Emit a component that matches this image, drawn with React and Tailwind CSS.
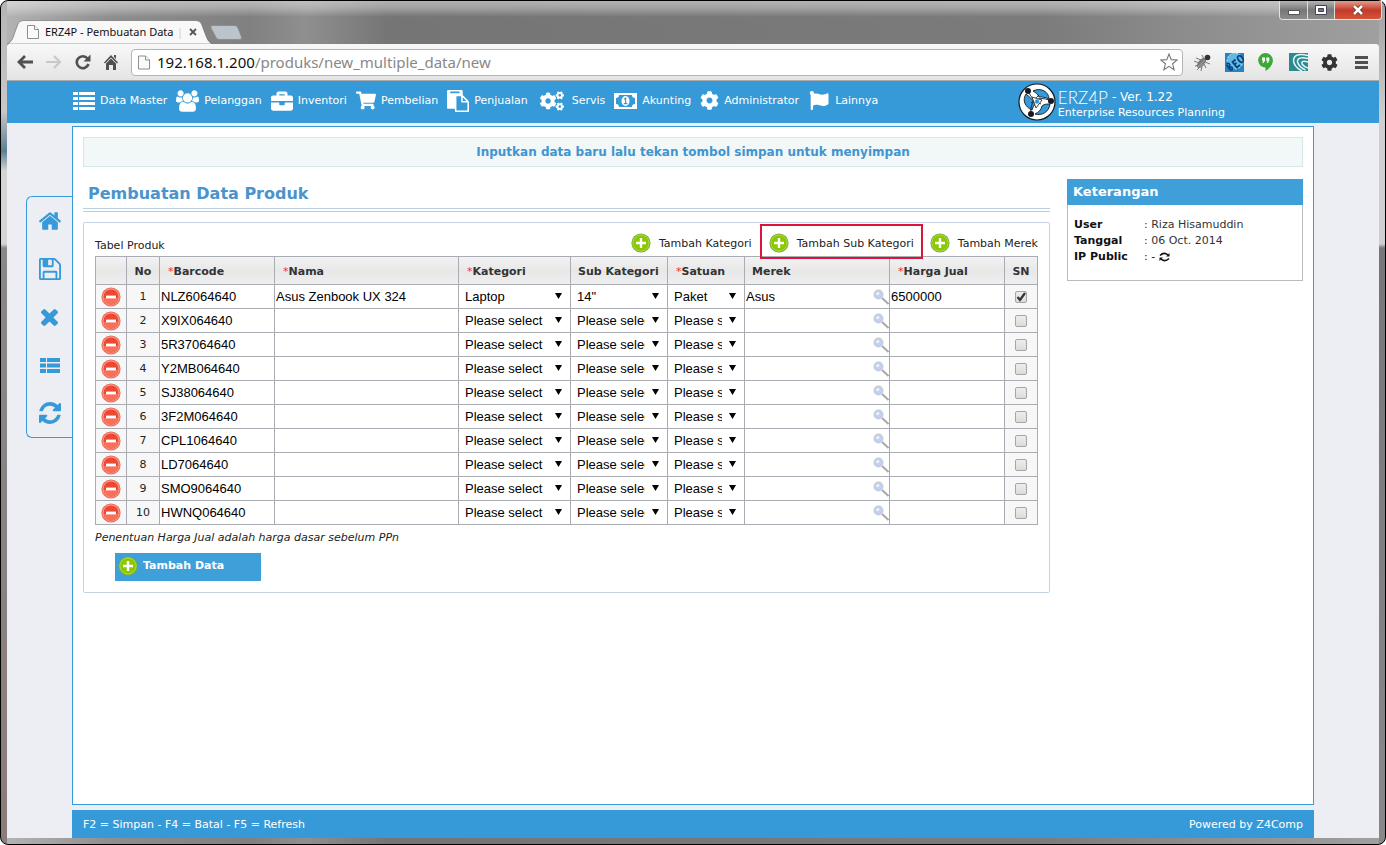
import { FaBriefcase, FaCog, FaCogs, FaFlag, FaShoppingCart } from "react-icons/fa";

const PRODUCTS = [
  {
    barcode: "NLZ6064640",
    nama: "Asus Zenbook UX 324",
    kategori: "Laptop",
    subKategori: '14"',
    satuan: "Paket",
    merek: "Asus",
    harga: "6500000",
    sn: true,
  },
  { barcode: "X9IX064640" },
  { barcode: "5R37064640" },
  { barcode: "Y2MB064640" },
  { barcode: "SJ38064640" },
  { barcode: "3F2M064640" },
  { barcode: "CPL1064640" },
  { barcode: "LD7064640" },
  { barcode: "SMO9064640" },
  { barcode: "HWNQ064640" },
];

const COLUMNS = [
  { label: "Barcode", required: true },
  { label: "Nama", required: true },
  { label: "Kategori", required: true },
  { label: "Sub Kategori" },
  { label: "Satuan", required: true },
  { label: "Merek" },
  { label: "Harga Jual", required: true },
];

function ListIcon({ className }) {
  return (
    <svg viewBox="0 0 22 18" className={className} fill="currentColor" aria-hidden="true">
      <path d="M0 0h5v3H0zM6 0h16v3H6zM0 5h5v3H0zM6 5h16v3H6zM0 10h5v3H0zM6 10h16v3H6zM0 15h5v3H0zM6 15h16v3H6z" />
    </svg>
  );
}

function ThListIcon({ className }) {
  return (
    <svg viewBox="0 0 20 15" className={className} fill="currentColor" aria-hidden="true">
      <path d="M0 0h6v4H0zM7 0h13v4H7zM0 5.5h6v4H0zM7 5.5h13v4H7zM0 11h6v4H0zM7 11h13v4H7z" />
    </svg>
  );
}

function UsersIcon({ className }) {
  return (
    <svg viewBox="0 0 1920 1792" className={className} fill="currentColor" aria-hidden="true">
      <path d="M593 896q-162 5-265 128h-134q-82 0-138-40.5t-56-118.5q0-353 124-353 6 0 43.5 21t97.5 42.5 119 21.5q67 0 133-23-5 37-5 66 0 139 81 256zm1071 637q0 120-73 189.5t-194 69.5h-874q-121 0-194-69.5t-73-189.5q0-53 3.5-103.5t14-109 26.5-108.5 43-97.5 62-81 85.5-53.5 111.5-20q10 0 43 21.5t73 48 107 48 135 21.5 135-21.5 107-48 73-48 43-21.5q61 0 111.5 20t85.5 53.5 62 81 43 97.5 26.5 108.5 14 109 3.5 103.5zm-1024-1277q0 106-75 181t-181 75-181-75-75-181 75-181 181-75 181 75 75 181zm704 384q0 159-112.5 271.5t-271.5 112.5-271.5-112.5-112.5-271.5 112.5-271.5 271.5-112.5 271.5 112.5 112.5 271.5zm576 225q0 78-56 118.5t-138 40.5h-134q-103-123-265-128 81-117 81-256 0-29-5-66 66 23 133 23 59 0 119-21.5t97.5-42.5 43.5-21q124 0 124 353zm-128-609q0 106-75 181t-181 75-181-75-75-181 75-181 181-75 181 75 75 181z" />
    </svg>
  );
}

function PasteIcon({ className }) {
  return (
    <svg viewBox="0 0 1792 1792" className={className} fill="currentColor" aria-hidden="true">
      <path d="M768 1664h896v-640h-416q-40 0-68-28t-28-68v-416h-384v1152zm256-1440v-64q0-13-9.5-22.5t-22.5-9.5h-704q-13 0-22.5 9.5t-9.5 22.5v64q0 13 9.5 22.5t22.5 9.5h704q13 0 22.5-9.5t9.5-22.5zm256 672h299l-299-299v299zm512 128v672q0 40-28 68t-68 28h-960q-40 0-68-28t-28-68v-160h-544q-40 0-68-28t-28-68v-1344q0-40 28-68t68-28h1088q40 0 68 28t28 68v328q21 13 36 28l408 408q28 28 48 76t20 88z" />
    </svg>
  );
}

function MoneyIcon({ className }) {
  return (
    <svg viewBox="0 0 23 16" className={className} aria-hidden="true">
      <path fill="currentColor" fillRule="evenodd" d="M0 0h23v16H0zM5 2a3 3 0 0 1-3 3v6a3 3 0 0 1 3 3h13a3 3 0 0 1 3-3V5a3 3 0 0 1-3-3z" />
      <ellipse cx="11.5" cy="8" rx="4" ry="5" fill="currentColor" />
      <path d="M10 6.3l1.6-1.1v5.2M9.8 10.7h3.6" fill="none" stroke="#379ad8" strokeWidth="1.2" />
    </svg>
  );
}

function HomeIcon({ className }) {
  return (
    <svg viewBox="89 240 1614 1300" className={className} fill="currentColor" aria-hidden="true">
      <path d="M1472 992v480q0 26-19 45t-45 19h-384v-384h-256v384h-384q-26 0-45-19t-19-45v-480q0-1 .5-3t.5-3l575-474 575 474q1 2 1 6zm223-69l-62 74q-8 9-21 11h-3q-13 0-21-7l-692-577-692 577q-12 8-24 7-13-2-21-11l-62-74q-8-10-7-23.5t11-21.5l719-599q32-26 76-26t76 26l244 204v-195q0-14 9-23t23-9h192q14 0 23 9t9 23v408l219 182q10 8 11 21.5t-7 23.5z" />
    </svg>
  );
}

function SaveIcon({ className }) {
  return (
    <svg viewBox="128 128 1536 1536" className={className} fill="currentColor" aria-hidden="true">
      <path d="M512 1536h768v-384h-768v384zm896 0h128v-896q0-14-10-38.5t-20-34.5l-281-281q-10-10-34-20t-39-10v416q0 40-28 68t-68 28h-576q-40 0-68-28t-28-68v-416h-128v1280h128v-416q0-40 28-68t68-28h832q40 0 68 28t28 68v416zm-384-928v-320q0-13-9.5-22.5t-22.5-9.5h-192q-13 0-22.5 9.5t-9.5 22.5v320q0 13 9.5 22.5t22.5 9.5h192q13 0 22.5-9.5t9.5-22.5zm640 32v928q0 40-28 68t-68 28h-1344q-40 0-68-28t-28-68v-1344q0-40 28-68t68-28h928q40 0 88 20t76 48l280 280q28 28 48 76t20 88z" />
    </svg>
  );
}

function CloseIcon({ className }) {
  return (
    <svg viewBox="302 366 1188 1188" className={className} fill="currentColor" aria-hidden="true">
      <path d="M1490 1322q0 40-28 68l-136 136q-28 28-68 28t-68-28l-294-294-294 294q-28 28-68 28t-68-28l-136-136q-28-28-28-68t28-68l294-294-294-294q-28-28-28-68t28-68l136-136q28-28 68-28t68 28l294 294 294-294q28-28 68-28t68 28l136 136q28 28 28 68t-28 68l-294 294 294 294q28 28 28 68z" />
    </svg>
  );
}

function RefreshIcon({ className }) {
  return (
    <svg viewBox="128 128 1536 1536" className={className} fill="currentColor" aria-hidden="true">
      <path d="M1639 1056q0 5-1 7-64 268-268 434.5t-478 166.5q-146 0-282.5-55t-243.5-157l-129 129q-19 19-45 19t-45-19-19-45v-448q0-26 19-45t45-19h448q26 0 45 19t19 45-19 45l-137 137q71 66 161 102t187 36q134 0 250-65t186-179q11-17 53-117 8-23 30-23h192q13 0 22.5 9.5t9.5 22.5zm25-800v448q0 26-19 45t-45 19h-448q-26 0-45-19t-19-45 19-45l138-138q-148-137-349-137-134 0-250 65t-186 179q-11 17-53 117-8 23-30 23h-199q-13 0-22.5-9.5t-9.5-22.5v-7q65-268 270-434.5t480-166.5q146 0 284 55.5t245 156.5l130-129q19-19 45-19t45 19 19 45z" />
    </svg>
  );
}

function PlusCircle() {
  return (
    <svg viewBox="0 0 20 20" className="h-5 w-5 shrink-0" aria-hidden="true">
      <circle cx="10" cy="10" r="9.6" fill="#74b022" />
      <circle cx="10" cy="10" r="8.2" fill="#8cc800" stroke="#b9df75" strokeWidth=".8" />
      <path d="M10 5v10M5 10h10" stroke="#fff" strokeWidth="2.4" />
    </svg>
  );
}

function MinusCircle() {
  return (
    <svg viewBox="0 0 20 20" className="h-5 w-5" aria-hidden="true">
      <circle cx="10" cy="10" r="9.6" fill="#ee6a56" />
      <circle cx="10" cy="10" r="8" fill="#ea4a35" stroke="#fbb5a6" strokeWidth=".8" />
      <path d="M3 11a7 7 0 0 0 14 0z" fill="#f7705c" />
      <path d="M5 10h10" stroke="#fff" strokeWidth="2.8" />
    </svg>
  );
}

function MagnifierIcon() {
  return (
    <svg viewBox="0 0 16 16" className="h-4 w-4" aria-hidden="true">
      <path d="M9 9l6.500 6" stroke="#a5a5a5" strokeWidth="1.800" />
      <circle cx="5.500" cy="5.500" r="4.300" fill="#bcd0fb" stroke="#c9ccd6" strokeWidth="1.400" />
      <circle cx="4.800" cy="4.600" r="1.700" fill="#eaf1ff" />
    </svg>
  );
}

function PageIcon({ className }) {
  return (
    <svg viewBox="0 0 12 14" className={className} fill="#fafafa" stroke="#8e8e8e" aria-hidden="true">
      <path d="M.5.5h7l4 4v9H.5z" />
      <path d="M7.500.5v4h4" />
    </svg>
  );
}

function LogoIcon() {
  return (
    <svg viewBox="0 0 38 38" className="h-[38px] w-[38px]" aria-hidden="true">
      <circle cx="19" cy="19" r="18" fill="#fff" stroke="#151a22" strokeWidth="1.200" />
      <g fill="#379ad8" stroke="#151a22" strokeWidth=".9">
        <path d="M15 8C23 4 31 9 31 16c-4-2-7-2-10-2-1-3-3-4-6-6z" />
        <path d="M8 11c-4 6-1 13 6 16 1-3 2-5 4-7-4-3-6-6-10-9z" />
        <path d="M17 31c7 2 14-2 15-10-3 0-6 0-8 2-1 4-3 6-7 8z" />
      </g>
      <g fill="none" stroke="#151a22" strokeWidth=".9">
        <path d="M10 8c3 6 6 10 13 13M33 18c-8-4-14-3-20 2M13 31c-1-8 2-14 8-19" />
      </g>
      <path d="M14 14l10 3-6 8z" fill="#fff" stroke="#151a22" strokeWidth=".8" />
      <circle cx="19" cy="18.500" r="2.200" fill="#379ad8" />
      <circle cx="10" cy="8" r="3" fill="#151a22" />
      <circle cx="33" cy="18" r="3" fill="#151a22" />
      <circle cx="13" cy="31" r="3" fill="#151a22" />
    </svg>
  );
}

const MENU = [
  { label: "Data Master", icon: <ListIcon className="h-[18px] w-[22px]" /> },
  { label: "Pelanggan", icon: <UsersIcon className="h-[22px] w-[23px]" /> },
  { label: "Inventori", icon: <FaBriefcase className="h-[22px] w-[22px]" /> },
  { label: "Pembelian", icon: <FaShoppingCart className="h-[19px] w-5" /> },
  { label: "Penjualan", icon: <PasteIcon className="h-[22px] w-[22px]" /> },
  { label: "Servis", icon: <FaCogs className="mx-[3px] h-[22px] w-6" /> },
  { label: "Akunting", icon: <MoneyIcon className="h-4 w-[23px]" /> },
  { label: "Administrator", icon: <FaCog className="h-[19px] w-[19px]" /> },
  { label: "Lainnya", icon: <FaFlag className="h-[19px] w-[22px]" /> },
];

const SHORTCUTS = [
  { label: "Beranda", icon: <HomeIcon className="h-[18px] w-[22px]" /> },
  { label: "Simpan", icon: <SaveIcon className="h-[22px] w-[22px]" /> },
  { label: "Batal", icon: <CloseIcon className="h-[17px] w-[17px]" /> },
  { label: "Daftar", icon: <ThListIcon className="h-[15px] w-5" /> },
  { label: "Refresh", icon: <RefreshIcon className="h-[22px] w-[22px]" /> },
];

function TitleBar() {
  return (
    <header className="flex h-[43px] items-end justify-between">
      <div className="flex items-end">
        <div className="relative flex h-6 w-[205px] items-center gap-[6px] pl-5">
          <svg viewBox="0 0 205 24" className="absolute inset-0 h-6 w-[205px]" aria-hidden="true">
            <path d="M0 24C5 22 6 18 8 12L11 4Q12.500.5 16 .5H189q4 0 5.500 3.500L199 16q2 6 6 8z" fill="#f8f8f8" stroke="#666" strokeWidth=".6" />
          </svg>
          <PageIcon className="relative h-[14px] w-3" />
          <span className="relative flex w-[138px] items-center justify-between font-['Noto_Sans','Open_Sans',sans-serif] text-[11px] whitespace-nowrap text-[#111]">
            ERZ4P - Pembuatan Data
            <span className="text-[#ccc]">|</span>
          </span>
          <button type="button" aria-label="Tutup tab" className="relative text-[#555]">
            <svg viewBox="0 0 8 8" className="h-2 w-2" stroke="currentColor" strokeWidth="1.800" aria-hidden="true">
              <path d="M1 1l6 6M7 1L1 7" />
            </svg>
          </button>
        </div>
        <button type="button" aria-label="Tab baru" className="mb-1 -ml-[2px]">
          <svg viewBox="0 0 32 15" className="h-[15px] w-8" aria-hidden="true">
            <path d="M2 .5h23q2 0 3 2.500L31.500 12q.5 2.500-2 2.500H9q-2 0-3-2L1 3Q.2.500 2 .5z" fill="#bcc4cb" stroke="#85898c" strokeWidth=".8" />
          </svg>
        </button>
      </div>
      <div className="-mr-[3px] flex h-[19px] self-start overflow-hidden rounded-b border border-t-0 border-[#e2e2e2] text-white">
        <button type="button" aria-label="Minimize" className="flex w-7 items-center justify-center border-r border-[#ddd] bg-linear-to-b from-[#b5b5b5] via-[#777] to-[#8c8c8c]">
          <svg viewBox="0 0 12 5" className="mt-1 h-[5px] w-3" aria-hidden="true">
            <path d="M.5.5h11v4H.5z" fill="#fff" stroke="#555" />
          </svg>
        </button>
        <button type="button" aria-label="Maximize" className="flex w-[27px] items-center justify-center border-r border-[#ddd] bg-linear-to-b from-[#b5b5b5] via-[#777] to-[#8c8c8c]">
          <svg viewBox="0 0 12 10" className="h-[10px] w-3" aria-hidden="true">
            <path d="M.5.5h11v9H.5z" fill="#fff" stroke="#445" />
            <path d="M3.500 3.500h5v3h-5z" fill="#777" stroke="#445" />
          </svg>
        </button>
        <button type="button" aria-label="Close" className="flex w-[46px] items-center justify-center bg-linear-to-b from-[#e39a8a] via-[#c5392a] to-[#d2543a]">
          <svg viewBox="0 0 12 10" className="h-[10px] w-3" aria-hidden="true">
            <path d="M2 1l8 8M10 1L2 9" stroke="#5b2a25" strokeWidth="4" />
            <path d="M2 1l8 8M10 1L2 9" stroke="#fff" strokeWidth="2.600" />
          </svg>
        </button>
      </div>
    </header>
  );
}

function BrowserToolbar() {
  return (
    <div className="flex h-[37px] items-center border-b border-[#aaa] bg-linear-to-b from-[#f8f8f8] to-[#e4e4e4] px-[10px]">
      <div className="flex items-center gap-[13px] text-[#505050]">
        <button type="button" aria-label="Kembali">
          <svg viewBox="0 0 16 14" className="h-[14px] w-4" fill="none" stroke="currentColor" strokeWidth="2.800" aria-hidden="true">
            <path d="M8 1L2 7l6 6M2 7h14" />
          </svg>
        </button>
        <button type="button" aria-label="Maju" className="text-[#c8c8c8]">
          <svg viewBox="0 0 16 14" className="h-[14px] w-4" fill="none" stroke="currentColor" strokeWidth="2.200" aria-hidden="true">
            <path d="M8 1l6 6-6 6M14 7H0" />
          </svg>
        </button>
        <button type="button" aria-label="Muat ulang">
          <svg viewBox="0 0 16 16" className="h-4 w-4" aria-hidden="true">
            <path d="M12.500 4.500A6 6 0 1 0 13.500 10" fill="none" stroke="currentColor" strokeWidth="2.600" />
            <path d="M15.500.5v7h-7z" fill="currentColor" />
          </svg>
        </button>
        <button type="button" aria-label="Beranda">
          <svg viewBox="0 0 14 16" className="h-4 w-[14px]" fill="currentColor" aria-hidden="true">
            <path d="M7 1l7 7.500-1 1L7 3.500l-6 6-1-1z" />
            <path d="M2 9.500l5-5 5 5V16H9v-5H5v5H2zM10 1h2v4l-2-2z" />
          </svg>
        </button>
      </div>
      <div className="ml-[13px] flex h-[27px] flex-1 items-center rounded-sm border border-[#b4b4b4] bg-white pr-1 pl-[6px]">
        <PageIcon className="h-[15px] w-3" />
        <a href="#url" className="ml-[7px] flex-1 font-['Noto_Sans','Open_Sans',sans-serif] text-[15px] leading-5 text-[#888]">
          <span className="text-[#111]">192.168.1.200</span>/produks/new_multiple_data/new
        </a>
        <button type="button" aria-label="Bookmark">
          <svg viewBox="0 0 18 18" className="h-[18px] w-[18px]" fill="#fff" stroke="#777" strokeWidth="1.100" aria-hidden="true">
            <path d="M9 1l2.200 5.600 6 .4-4.600 3.800 1.500 5.900L9 13.400l-5.100 3.300 1.500-5.900L.8 7l6-.4z" />
          </svg>
        </button>
      </div>
      <div className="ml-[10px] flex items-center gap-[13px]">
        <svg viewBox="0 0 19 19" className="h-[19px] w-[19px]" aria-hidden="true">
          <path d="M1 8l5 2M2 13l5-1M8 18l1-5M13 15l-2-4M3 5l5 2M17 11l-5-2M9 2l2 4M4 17l4-4" stroke="#777" />
          <ellipse cx="8.500" cy="10" rx="3.200" ry="6" transform="rotate(40 8.500 10)" fill="#777" />
          <path d="M11.500 7L5 14M13 9l-6 5" stroke="#bbb" strokeWidth=".7" />
          <circle cx="14.500" cy="4.500" r="2.800" fill="#333" />
        </svg>
        <svg viewBox="0 0 19 19" className="h-[19px] w-[19px]" aria-hidden="true">
          <path fill="#2384c4" d="M0 0h19v19H0z" />
          <circle cx="10" cy="8" r="8" fill="#62b8e2" stroke="#c5e8f7" strokeDasharray="2 1.500" />
          <path d="M1.500 11.500l4 5.500q3 0 1.500-2.500-1.500-1-2.500-.5 1-2-.5-3.500-1.500-.5-2.500 1M10.500 6.500l-3 2.500 4.500 5.500 3-2.500M9.500 11.500l2-1.700" fill="none" stroke="#06427c" strokeWidth="1.700" />
          <ellipse cx="15.500" cy="6" rx="2.200" ry="3.600" transform="rotate(-38 15.500 6)" fill="none" stroke="#06427c" strokeWidth="1.700" />
        </svg>
        <svg viewBox="0 0 15 18" className="ml-px h-[18px] w-[15px]" aria-hidden="true">
          <circle cx="7.500" cy="7.300" r="7.300" fill="#3ba935" />
          <path d="M14.800 7.300Q14.500 14 7.500 18v-5z" fill="#3ba935" />
          <path d="M4 4.500h3v3.200L5.500 10H4.300l1-2.200H4zM8.300 4.500h3v3.200L9.800 10H8.600l1-2.200H8.300z" fill="#fff" />
        </svg>
        <svg viewBox="0 0 19 18" className="ml-[3px] h-[18px] w-[19px]" aria-hidden="true">
          <path fill="#2c8a90" d="M0 0h19v18H0z" />
          <path d="M19 2.500Q5-1 4.500 7.500 5 14 13 18M19 5.500Q8 3 8.500 9q1.500 5 8 8M19 9q-7-2-6 2 2 3 6 4" fill="none" stroke="#e4f5f4" strokeWidth="1.500" />
        </svg>
        <FaCog className="h-[17px] w-[17px] text-[#333]" />
        <svg viewBox="0 0 13 13" className="ml-1 mr-px h-[13px] w-[13px]" fill="#505050" aria-hidden="true">
          <path d="M0 0h13v3H0zM0 5h13v3H0zM0 10h13v3H0z" />
        </svg>
      </div>
    </div>
  );
}

function MainMenu() {
  return (
    <nav className="flex h-[42px] items-center justify-between bg-[#379ad8] pr-[154px] pl-[66px] text-white">
      <ul className="flex items-center gap-[9px] pb-[3px]">
        {MENU.map((item) => (
          <li key={item.label}>
            <a href="#menu" className="flex items-center gap-[5px] text-[11px] whitespace-nowrap">
              {item.icon}
              <span className="pt-[2px]">{item.label}</span>
            </a>
          </li>
        ))}
      </ul>
      <div className="flex items-center gap-[2px]">
        <LogoIcon />
        <div className="pt-[6px] text-[11px] leading-[15px] whitespace-nowrap">
          <p className="flex items-center gap-1">
            <span className="font-['Lato',sans-serif] text-[17px] font-light">ERZ4P</span>
            <span className="text-[12px]">- Ver. 1.22</span>
          </p>
          <p>Enterprise Resources Planning</p>
        </div>
      </div>
    </nav>
  );
}

function SideShortcuts() {
  return (
    <aside className="mt-[73px] ml-[19px] self-start rounded-l-md border border-r-0 border-[#379ad8] text-[#379ad8]">
      <div className="flex flex-col items-center">
        {SHORTCUTS.map((item) => (
          <button key={item.label} type="button" aria-label={item.label} className="flex h-12 w-full items-center justify-center">
            {item.icon}
          </button>
        ))}
      </div>
    </aside>
  );
}

function CellSelect({ label, value }) {
  return (
    <div className="relative">
      <select
        aria-label={label}
        defaultValue={value ?? ""}
        className="block h-[23px] w-full appearance-none bg-white pr-[22px] pl-[6px] font-['Liberation_Sans',Arial,sans-serif] text-[13px] text-black"
      >
        <option value="">Please select</option>
        {value ? <option value={value}>{value}</option> : null}
      </select>
      <svg viewBox="0 0 7 6" className="pointer-events-none absolute top-2 right-2 h-[6px] w-[7px]" aria-hidden="true">
        <path d="M0 0h7L3.500 6z" />
      </svg>
    </div>
  );
}

function CellInput({ label, value }) {
  return (
    <input
      type="text"
      aria-label={label}
      defaultValue={value ?? ""}
      className="block h-[23px] w-full bg-white pl-px font-['Liberation_Sans',Arial,sans-serif] text-[13px] text-black"
    />
  );
}

function ProductTable() {
  return (
    <table className="w-full table-fixed border-collapse">
      <colgroup>
        <col className="w-[31px]" />
        <col className="w-[33px]" />
        <col className="w-[115px]" />
        <col className="w-[184px]" />
        <col className="w-[112px]" />
        <col className="w-[97px]" />
        <col className="w-[77px]" />
        <col className="w-[145px]" />
        <col className="w-[115px]" />
        <col className="w-[33px]" />
      </colgroup>
      <thead>
        <tr className="h-7 bg-linear-to-b from-[#f2f2f2] via-[#e8e8e8] to-[#efefef] text-left text-[11px] text-[#333] [&>th]:border [&>th]:border-[#a9adb3] [&>th]:pt-[3px]">
          <th />
          <th className="text-center">No</th>
          {COLUMNS.map((col) => (
            <th key={col.label} className="pl-[7px] whitespace-nowrap">
              {col.required ? <span className="pl-px font-normal text-red-500">*</span> : null}
              {col.label}
            </th>
          ))}
          <th className="text-center">SN</th>
        </tr>
      </thead>
      <tbody>
        {PRODUCTS.map((row, index) => (
          <tr key={row.barcode} className="h-6 [&>td]:border [&>td]:border-[#a9adb3] [&>td]:p-0">
            <td className="bg-[#f7f7f7]">
              <button type="button" aria-label="Hapus baris" className="mx-auto block">
                <MinusCircle />
              </button>
            </td>
            <td className="bg-[#f7f7f7] text-center text-[11px] text-[#222]">
              <span className="block pt-[2px]">{index + 1}</span>
            </td>
            <td>
              <CellInput label="Barcode" value={row.barcode} />
            </td>
            <td>
              <CellInput label="Nama" value={row.nama} />
            </td>
            <td>
              <CellSelect label="Kategori" value={row.kategori} />
            </td>
            <td>
              <CellSelect label="Sub Kategori" value={row.subKategori} />
            </td>
            <td>
              <CellSelect label="Satuan" value={row.satuan} />
            </td>
            <td>
              <div className="flex items-center">
                <CellInput label="Merek" value={row.merek} />
                <button type="button" aria-label="Cari merek">
                  <MagnifierIcon />
                </button>
              </div>
            </td>
            <td>
              <CellInput label="Harga Jual" value={row.harga} />
            </td>
            <td className="bg-[#f7f7f7]">
              <div className="relative mx-auto h-3 w-3">
                <input
                  type="checkbox"
                  aria-label="SN"
                  defaultChecked={row.sn}
                  className="peer block h-3 w-3 appearance-none rounded-xs border border-[#a5a5a5] bg-linear-to-b from-[#ededed] to-[#dcdcdc]"
                />
                <svg
                  viewBox="0 0 12 12"
                  className="pointer-events-none absolute inset-0 hidden h-3 w-3 peer-checked:block"
                  fill="none"
                  stroke="#333"
                  strokeWidth="2.200"
                  aria-hidden="true"
                >
                  <path d="M2.500 6l2.500 3 5-7" />
                </svg>
              </div>
            </td>
          </tr>
        ))}
      </tbody>
    </table>
  );
}

function ProductPanel() {
  return (
    <section className="rounded-xs border border-[#c5d3e2] px-[11px] pt-px pb-[11px]">
      <div className="flex items-center justify-between">
        <h2 className="pt-3 text-[11px] text-[#222]">Tabel Produk</h2>
        <div className="relative z-10 -mb-[3px] flex items-center text-[11px] text-[#222]">
          <button type="button" className="flex h-[35px] items-center gap-2 pt-[3px]">
            <PlusCircle />
            <span className="pt-[2px]">Tambah Kategori</span>
          </button>
          <button type="button" className="mr-[7px] ml-2 flex h-[35px] items-center gap-2 border-2 border-[#dc143c] px-[7px] pt-[3px]">
            <PlusCircle />
            <span className="pt-[2px]">Tambah Sub Kategori</span>
          </button>
          <button type="button" className="flex h-[35px] items-center gap-2 pt-[3px]">
            <PlusCircle />
            <span className="pt-[2px]">Tambah Merek</span>
          </button>
        </div>
      </div>
      <ProductTable />
      <p className="mt-[5px] text-[11px] leading-4 text-[#222] italic">
        Penentuan Harga Jual adalah harga dasar sebelum PPn
      </p>
      <button type="button" className="mt-[7px] ml-5 flex h-7 w-[146px] items-center gap-[5px] bg-[#3f9fd9] pb-[3px] pl-[3px] text-[11px] font-bold text-white">
        <PlusCircle />
        <span className="pt-[2px]">Tambah Data</span>
      </button>
    </section>
  );
}

function InfoBox() {
  return (
    <aside className="mt-3 w-[236px] shrink-0 self-start">
      <h2 className="h-[26px] bg-[#3f9fd9] pl-[6px] text-[13px] leading-[26px] font-bold text-white">Keterangan</h2>
      <div className="border border-t-0 border-[#bbb] px-[6px] pt-3 pb-[15px] text-[11px] leading-4 text-[#111]">
        <dl className="grid grid-cols-[70px_1fr]">
          <dt className="font-bold">User</dt>
          <dd className="text-[#333]">: Riza Hisamuddin</dd>
          <dt className="font-bold">Tanggal</dt>
          <dd className="text-[#333]">: 06 Oct. 2014</dd>
          <dt className="font-bold">IP Public</dt>
          <dd className="flex items-center gap-1">
            : -
            <button type="button" aria-label="Perbarui IP">
              <svg viewBox="0 0 11 10" className="h-[10px] w-[11px]" fill="none" stroke="currentColor" strokeWidth="1.600" aria-hidden="true">
                <path d="M1 3.500Q5-.5 9 3M10 6.500Q6 10.500 2 7" />
                <path d="M10.500 1v3.500H7zM.5 9V5.500H4z" fill="currentColor" stroke="none" />
              </svg>
            </button>
          </dd>
        </dl>
      </div>
    </aside>
  );
}

export default function App() {
  return (
    <div className="flex min-h-screen flex-col rounded-lg border border-black px-[6px] pb-[6px] font-['DejaVu_Sans',Verdana,sans-serif] [background:linear-gradient(180deg,#b5b5b5,#c8c8c8_110px,#5c7f96_150px,#d4d4d4_170px,#d4d4d4_243px,#888_247px,#8a7d7a)_left/6px_100%_no-repeat,linear-gradient(180deg,#a0a0a0,#cfcfcf_120px,#cfcfcf_243px,#777_247px,#888)_right/6px_100%_no-repeat,linear-gradient(180deg,#ffffff70,#ffffff50_7px,#ffffff00_16px),linear-gradient(90deg,#b5b5b5,#8e8e8e_8%,#808080_18%,#8f8f8f_22%,#757575_28%,#7b7b7b_75%,#8d8d8d_86%,#a0a0a0)]">
      <TitleBar />
      <div className="flex flex-1 flex-col overflow-hidden rounded-t-sm bg-[#eceef3]">
        <BrowserToolbar />
        <MainMenu />
        <div className="grid flex-1 grid-cols-[65px_1fr_65px] grid-rows-[1fr_auto]">
          <SideShortcuts />
          <main className="mt-[3px] border border-[#379ad8] bg-white p-[10px]">
            <p className="border border-[#d3e8e8] bg-[#f2f7f7] text-center text-[12px] leading-7 font-bold text-[#3f95d0]">
              Inputkan data baru lalu tekan tombol simpan untuk menyimpan
            </p>
            <div className="flex gap-[17px]">
              <div className="min-w-0 flex-1">
                <h1 className="mt-[13px] pl-[5px] text-[16px] leading-7 font-bold text-[#4a94cd]">Pembuatan Data Produk</h1>
                <div className="mb-[10px] h-1 border-y border-[#b9cfe2]" />
                <ProductPanel />
              </div>
              <InfoBox />
            </div>
          </main>
          <footer className="col-start-2 mt-[5px] flex h-7 items-center justify-between bg-[#379ad8] px-[11px] pt-[2px] text-[11px] text-white">
            <p>F2 = Simpan - F4 = Batal - F5 = Refresh</p>
            <p>
              Powered by <a href="#z4comp">Z4Comp</a>
            </p>
          </footer>
        </div>
      </div>
    </div>
  );
}
